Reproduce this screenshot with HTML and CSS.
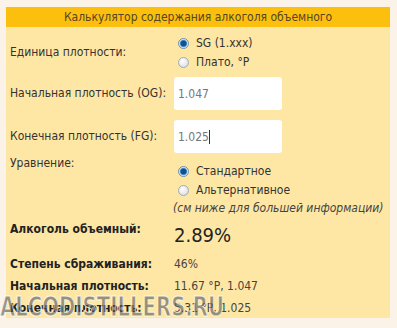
FILE: index.html
```html
<!DOCTYPE html>
<html lang="ru">
<head>
  <meta charset="UTF-8">
  <title>Калькулятор содержания алкоголя</title>
  <link rel="stylesheet" href="styles.css">
</head>
<body>
  <div class="calc">
    <div class="calc-title">Калькулятор содержания алкоголя объемного</div>
    <div class="calc-body">
      <div class="row unit">
        <div class="label mid">Единица плотности:</div>
        <div class="value radios">
          <label class="opt"><input type="radio" name="unit" checked> SG (1.xxx)</label>
          <label class="opt"><input type="radio" name="unit"> Плато, °P</label>
        </div>
      </div>
      <div class="row og">
        <div class="label mid">Начальная плотность (OG):</div>
        <div class="value"><input class="field" type="text" value="1.047"></div>
      </div>
      <div class="row fg">
        <div class="label mid">Конечная плотность (FG):</div>
        <div class="value typing"><input class="field" type="text" value="1.025"><span class="caret"></span></div>
      </div>
      <div class="row eq">
        <div class="label">Уравнение:</div>
        <div class="value radios">
          <label class="opt"><input type="radio" name="eq" checked> Стандартное</label>
          <label class="opt"><input type="radio" name="eq"> Альтернативное</label>
          <div class="note">(см ниже для большей информации)</div>
        </div>
      </div>
      <div class="row abv">
        <div class="label strong">Алкоголь объемный:</div>
        <div class="value big">2.89%</div>
      </div>
      <div class="row res">
        <div class="label strong">Степень сбраживания:</div>
        <div class="value">46%</div>
      </div>
      <div class="row res">
        <div class="label strong">Начальная плотность:</div>
        <div class="value">11.67 °P, 1.047</div>
      </div>
      <div class="row res">
        <div class="label strong">Конечная плотность:</div>
        <div class="value">5.31 °P, 1.025</div>
      </div>
    </div>
  </div>
  <div class="watermark">ALCODISTILLERS.RU</div>
</body>
</html>
```

FILE: styles.css
```css
body { margin: 0; padding-top: 7px; background: #fbf3e7; font-family: "DejaVu Sans Condensed", "DejaVu Sans", sans-serif; font-size: 12px; line-height: 15px; color: #333; position: relative; }
.calc { margin: 0 7px 0 6px; background: #fee7a4; height: 311px; }
.calc-title { background: #fcbf0d; color: #544526; text-align: center; height: 20px; line-height: 20px; font-size: 12px; }
.calc-body { padding: 8px 0 0 4px; }
.row { display: grid; grid-template-columns: 164px 1fr; }
.label { display: flex; align-items: flex-start; }
.label.mid { align-items: center; }
.value { display: flex; align-items: center; }
.radios { flex-direction: column; align-items: flex-start; gap: 3px; padding-left: 4px; }
.opt { display: flex; align-items: center; gap: 7px; height: 16px; }
.opt input { appearance: none; margin: 0; width: 11px; height: 11px; border-radius: 50%; border: 1px solid #a3aab2; background: radial-gradient(circle at 40% 35%, #fff, #d3d7dc); }
.opt input:checked { background: radial-gradient(circle, #164f8c 0 2.5px, #4b8cc6 3.2px, #e4edf6 4.2px); border-color: #6d8fb0; }
.note { font-style: italic; color: #444; margin-left: -5px; }
.og { margin-top: 7px; }
.fg { margin-top: 10px; }
.field { width: 108px; height: 33px; box-sizing: border-box; border: none; border-radius: 3px; background: #fff; font: inherit; color: #777; padding: 0 4px; outline: none; }
.typing { position: relative; }
.caret { position: absolute; left: 35px; top: 10px; width: 1px; height: 14px; background: #333; }
.eq { margin-top: 3px; }
.eq .radios { padding-top: 7px; }
.strong { font-weight: bold; color: #222; }
.abv { margin-top: 6px; }
.big { font-size: 20px; color: #222; line-height: 26px; align-items: flex-start; }
.res { margin-top: 7px; }
.abv + .res { margin-top: 9px; }
.res .value { color: #444; }
.watermark { position: absolute; left: 0; top: 292px; font-family: "DejaVu Sans Condensed", "DejaVu Sans", sans-serif; font-size: 27px; font-weight: bold; line-height: 30px; color: rgba(85, 85, 85, 0.62); -webkit-text-stroke: 1px rgba(255, 255, 255, 0.8); transform: scaleX(0.81); transform-origin: left top; }
```
